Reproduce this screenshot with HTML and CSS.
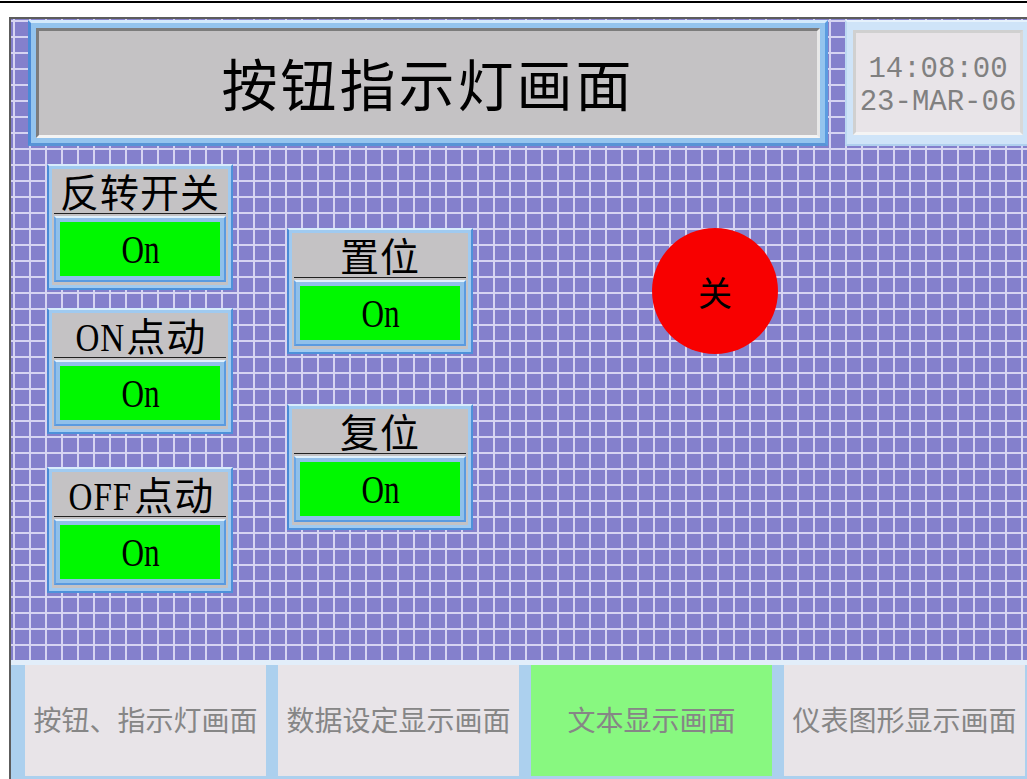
FILE: index.html
```html
<!DOCTYPE html>
<html lang="zh-CN">
<head>
    <meta charset="UTF-8">
    <meta name="viewport" content="width=device-width, initial-scale=1.0">
    <title>按钮指示灯画面</title>
    <link rel="stylesheet" href="styles.css">
</head>
<body>
    <div class="topline"></div>
    <div class="screen">
        <header class="top">
            <div class="title-frame">
                <div class="title-box">按钮指示灯画面</div>
            </div>
            <div class="clock-frame">
                <div class="clock">
                    <div>14:08:00</div>
                    <div>23-MAR-06</div>
                </div>
            </div>
        </header>

        <main class="stage">
            <div class="col col-left">
                <div class="card">
                    <div class="card-body">
                        <div class="card-title">反转开关</div>
                        <div class="lamp-frame"><div class="lamp"><span>On</span></div></div>
                    </div>
                </div>
                <div class="card card-second">
                    <div class="card-body">
                        <div class="card-title"><span class="latin">ON</span>点动</div>
                        <div class="lamp-frame"><div class="lamp"><span>On</span></div></div>
                    </div>
                </div>
                <div class="card card-third">
                    <div class="card-body">
                        <div class="card-title"><span class="latin">OFF</span>点动</div>
                        <div class="lamp-frame"><div class="lamp"><span>On</span></div></div>
                    </div>
                </div>
            </div>

            <div class="col col-mid">
                <div class="card">
                    <div class="card-body">
                        <div class="card-title">置位</div>
                        <div class="lamp-frame"><div class="lamp"><span>On</span></div></div>
                    </div>
                </div>
                <div class="card card-reset">
                    <div class="card-body">
                        <div class="card-title">复位</div>
                        <div class="lamp-frame"><div class="lamp"><span>On</span></div></div>
                    </div>
                </div>
            </div>

            <div class="round-lamp">关</div>
        </main>

        <nav class="nav">
            <div class="nav-btn">按钮、指示灯画面</div>
            <div class="nav-btn">数据设定显示画面</div>
            <div class="nav-btn active">文本显示画面</div>
            <div class="nav-btn">仪表图形显示画面</div>
        </nav>
    </div>
</body>
</html>
```

FILE: styles.css
```css
body {
    margin: 0;
    width: 1027px;
    height: 779px;
    overflow: hidden;
    background: #fff;
    font-family: "Liberation Serif", "Noto Sans CJK SC", serif;
    color: #000;
}

.topline {
    height: 2px;
    margin-top: 1px;
    background: #000;
}

/* HMI screen with the lavender grid */
.screen {
    margin: 14px 0 0 9px;
    height: 760px;
    width: 1040px;
    border-left: 2px solid #5c5c5c;
    border-top: 2px solid #5c5c5c;
    display: flex;
    flex-direction: column;
    background-color: #8480cc;
    background-image:
        linear-gradient(90deg, #d6d4f2 2px, transparent 2px),
        linear-gradient(#d6d4f2 2px, transparent 2px);
    background-size: 16px 16px;
    background-position: 2px 1px;
}

.top {
    display: flex;
    gap: 17px;
    height: 126px;
    margin: 1px 0 0 17px;
}

.title-frame {
    width: 800px;
    box-sizing: border-box;
    padding: 5px;
    background: #94c4ee;
    border: 3px solid;
    border-color: #d4eafc #5c9ce0 #5894d6 #4a8ad6;
}

.title-box {
    height: 100%;
    box-sizing: border-box;
    background: #c4c2c4;
    border: 3px solid;
    border-color: #7c7c7c #e8e8e8 #f4f4f4 #7c7c7c;
    display: flex;
    align-items: center;
    justify-content: center;
    font-family: "Noto Sans CJK SC", sans-serif;
    font-size: 56px;
    letter-spacing: 3px;
    padding-bottom: 4px;
}

.clock-frame {
    width: 200px;
    box-sizing: border-box;
    padding: 8px 0 9px 6px;
    background: #cfe4f8;
    border: 2px solid;
    border-color: #e6f2fc #bcd8f2 #b0d0ee #bcd8f2;
}

.clock {
    width: 170px;
    height: 100%;
    box-sizing: border-box;
    background: #e8e4e8;
    border: 3px solid;
    border-color: #d0d0d0 #d8d8d8 #f4f4f4 #d0d0d0;
    display: flex;
    flex-direction: column;
    justify-content: center;
    align-items: center;
    font-family: "Liberation Mono", monospace;
    font-size: 29px;
    line-height: 33px;
    color: #808080;
    padding-top: 7px;
}

/* indicator area */
.stage {
    flex: 1;
    display: flex;
    align-items: flex-start;
    padding-left: 36px;
}

.col {
    display: flex;
    flex-direction: column;
}

.col-left {
    padding-top: 18px;
}

.col-mid {
    margin-left: 54px;
    padding-top: 82px;
}

.card-second {
    margin-top: 18px;
}

.card-third {
    margin-top: 33px;
}

.card-reset {
    margin-top: 50px;
}

.card {
    width: 186px;
    height: 126px;
    box-sizing: border-box;
    padding: 3px;
    background: #a0caf0;
    border: 2px solid;
    border-color: #d8ecfc #4e92da #4e92da #4a8ad6;
}

.card-body {
    height: 100%;
    box-sizing: border-box;
    background: #c4c2c4;
    padding: 0 2px 3px;
}

.card-title {
    height: 44px;
    line-height: 50px;
    border-bottom: 1px solid #222;
    text-align: center;
    font-size: 39px;
    letter-spacing: 1px;
    white-space: nowrap;
}

.latin {
    display: inline-block;
    transform: scaleX(0.85);
    margin: 0 -3px;
}

.lamp-frame {
    margin-top: 2px;
    padding: 4px;
    background: #90c0ea;
    border: 2px solid;
    border-color: #e0f0fc #5a9ae0 #5a9ae0 #6aa6e4;
}

.lamp {
    height: 54px;
    line-height: 56px;
    background: #00f800;
    text-align: center;
    font-size: 40px;
}

.lamp span {
    display: inline-block;
    transform: scaleX(0.78);
}

.round-lamp {
    width: 126px;
    height: 126px;
    margin: 82px 0 0 179px;
    border-radius: 50%;
    background: #f80000;
    display: flex;
    align-items: center;
    justify-content: center;
    font-family: "Noto Sans CJK SC", sans-serif;
    font-size: 34px;
}

/* bottom screen buttons */
.nav {
    height: 119px;
    box-sizing: border-box;
    display: flex;
    gap: 12px;
    padding: 5px 0 3px 14px;
    background: linear-gradient(#e2eefa 5px, #acd0ee 5px);
}

.nav-btn {
    flex: 0 0 241px;
    display: flex;
    align-items: center;
    justify-content: center;
    background: #e8e4e8;
    color: #868686;
    font-family: "Noto Sans CJK SC", sans-serif;
    font-size: 28px;
    padding-bottom: 4px;
}

.nav-btn.active {
    background: #88f880;
}
```
